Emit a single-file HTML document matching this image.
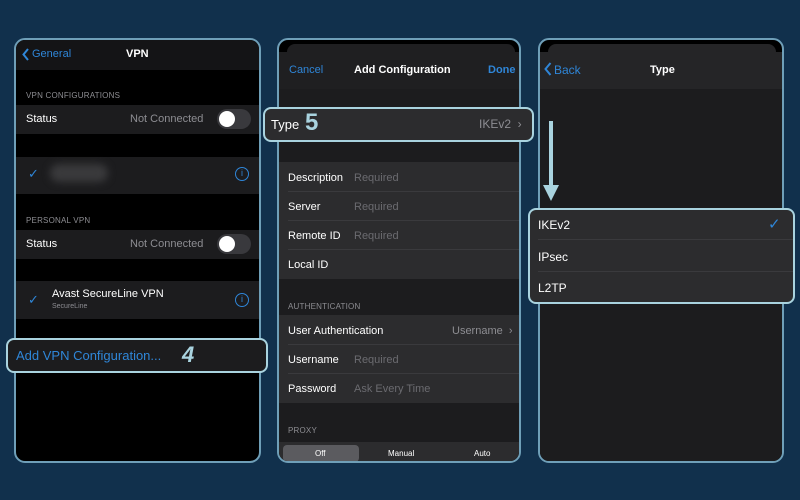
<!DOCTYPE html>
<html><head><meta charset="utf-8"><style>
*{margin:0;padding:0;box-sizing:border-box}
body{width:800px;height:500px;background:#11304c;font-family:"Liberation Sans",sans-serif;position:relative;overflow:hidden;color:#fff}
.a{position:absolute}
.panel{position:absolute;border:2px solid #6f9fb8;border-radius:11px;overflow:hidden;background:#000}
.t{position:absolute;white-space:nowrap}
.hl{position:absolute;border:2px solid #a9d3df;border-radius:8px}
.lbl{font-size:8px;color:#8d8d92;letter-spacing:.2px}
.r{font-size:11px}
.g{color:#6b6b70;font-size:11px}
.blue{color:#2f86d8}
.sep{position:absolute;height:1px;background:#3a3a3d}
.tog{position:absolute;width:34px;height:20px;border-radius:10px;background:#39393d}
.tog:after{content:"";position:absolute;left:2px;top:2px;width:16px;height:16px;border-radius:50%;background:#fff}
</style></head><body>

<!-- Panel 1 -->
<div class="panel" style="left:14px;top:38px;width:247px;height:425px">
  <div class="a" style="left:0;top:0;width:100%;height:30px;background:#141416"></div>
  <svg class="a" style="left:6px;top:8px" width="8" height="13"><path d="M6 1L1.5 6.5L6 12" stroke="#2f86d8" stroke-width="2" fill="none"/></svg>
  <div class="t blue r" style="left:16px;top:8px">General</div>
  <div class="t r" style="left:110px;top:8px;font-weight:bold">VPN</div>
  <div class="t lbl" style="left:10px;top:51px">VPN CONFIGURATIONS</div>
  <div class="a" style="left:0;top:65px;width:100%;height:29px;background:#1c1c1e"></div>
  <div class="t r" style="left:10px;top:73px">Status</div>
  <div class="t r" style="left:114px;top:73px;color:#8d8d92">Not Connected</div>
  <div class="tog" style="left:201px;top:69px"></div>
  <div class="a" style="left:0;top:117px;width:100%;height:37px;background:#1c1c1e"></div>
  <div class="t blue" style="left:12px;top:126px;font-size:13px">✓</div>
  <div class="a" style="left:34px;top:124px;width:58px;height:18px;border-radius:9px;background:#3a3a3c;filter:blur(4px)"></div>
  <div class="a" style="left:219px;top:127px;width:14px;height:14px;border:1.5px solid #2f86d8;border-radius:50%;font-size:9px;color:#2f86d8;text-align:center;line-height:11px">i</div>
  <div class="t lbl" style="left:10px;top:176px">PERSONAL VPN</div>
  <div class="a" style="left:0;top:190px;width:100%;height:29px;background:#1c1c1e"></div>
  <div class="t r" style="left:10px;top:198px">Status</div>
  <div class="t r" style="left:114px;top:198px;color:#8d8d92">Not Connected</div>
  <div class="tog" style="left:201px;top:194px"></div>
  <div class="a" style="left:0;top:241px;width:100%;height:38px;background:#1c1c1e"></div>
  <div class="t blue" style="left:12px;top:252px;font-size:13px">✓</div>
  <div class="t r" style="left:36px;top:248px">Avast SecureLine VPN</div>
  <div class="t" style="left:36px;top:263px;font-size:7px;color:#8d8d92">SecureLine</div>
  <div class="a" style="left:219px;top:253px;width:14px;height:14px;border:1.5px solid #2f86d8;border-radius:50%;font-size:9px;color:#2f86d8;text-align:center;line-height:11px">i</div>
</div>
<div class="hl" style="left:6px;top:338px;width:262px;height:35px;background:#1c1c1e">
  <div class="t blue" style="left:8px;top:8px;font-size:13px">Add VPN Configuration...</div>
  <div class="t" style="left:174px;top:2px;font-size:22px;font-weight:bold;color:#a9d3df;font-style:italic">4</div>
</div>

<!-- Panel 2 -->
<div class="panel" style="left:277px;top:38px;width:244px;height:425px;background:#000">
  <div class="a" style="left:8px;top:4px;width:228px;height:20px;border-radius:8px 8px 0 0;background:#1f1f21"></div>
  <div class="a" style="left:0;top:12px;width:100%;height:413px;background:#1c1c1e"></div>
  <div class="a" style="left:0;top:12px;width:100%;height:37px;background:#1f1f21"></div>
  <div class="t blue r" style="left:10px;top:24px">Cancel</div>
  <div class="t r" style="left:75px;top:24px;font-weight:bold">Add Configuration</div>
  <div class="t blue r" style="left:209px;top:24px;font-weight:bold">Done</div>
  <div class="a" style="left:0;top:122px;width:100%;height:117px;background:#2c2c2e"></div>
  <div class="sep" style="left:9px;right:0;top:151px"></div>
  <div class="sep" style="left:9px;right:0;top:180px"></div>
  <div class="sep" style="left:9px;right:0;top:209px"></div>
  <div class="t r" style="left:9px;top:132px">Description</div><div class="t g" style="left:75px;top:132px">Required</div>
  <div class="t r" style="left:9px;top:161px">Server</div><div class="t g" style="left:75px;top:161px">Required</div>
  <div class="t r" style="left:9px;top:190px">Remote ID</div><div class="t g" style="left:75px;top:190px">Required</div>
  <div class="t r" style="left:9px;top:219px">Local ID</div>
  <div class="t lbl" style="left:9px;top:262px">AUTHENTICATION</div>
  <div class="a" style="left:0;top:275px;width:100%;height:88px;background:#2c2c2e"></div>
  <div class="sep" style="left:9px;right:0;top:304px"></div>
  <div class="sep" style="left:9px;right:0;top:333px"></div>
  <div class="t r" style="left:9px;top:285px">User Authentication</div><div class="t r" style="left:173px;top:285px;color:#8d8d92">Username &nbsp;›</div>
  <div class="t r" style="left:9px;top:314px">Username</div><div class="t g" style="left:75px;top:314px">Required</div>
  <div class="t r" style="left:9px;top:343px">Password</div><div class="t g" style="left:75px;top:343px">Ask Every Time</div>
  <div class="t lbl" style="left:9px;top:386px">PROXY</div>
  <div class="a" style="left:0;top:402px;width:100%;height:23px;background:#2c2c2e"></div>
  <div class="a" style="left:4px;top:405px;width:76px;height:17px;border-radius:4px;background:#5b5b5f"></div>
  <div class="t" style="left:36px;top:409px;font-size:8px">Off</div>
  <div class="t" style="left:109px;top:409px;font-size:8px">Manual</div>
  <div class="t" style="left:195px;top:409px;font-size:8px">Auto</div>
</div>
<div class="hl" style="left:263px;top:107px;width:271px;height:35px;background:#2c2c2e">
  <div class="t" style="left:6px;top:8px;font-size:13px">Type</div>
  <div class="t" style="left:40px;top:0px;font-size:24px;font-weight:bold;color:#a9d3df">5</div>
  <div class="t" style="left:214px;top:8px;font-size:12px;color:#8d8d92">IKEv2 &nbsp;›</div>
</div>

<!-- Panel 3 -->
<div class="panel" style="left:538px;top:38px;width:246px;height:425px;background:#000">
  <div class="a" style="left:8px;top:4px;width:228px;height:20px;border-radius:8px 8px 0 0;background:#252527"></div>
  <div class="a" style="left:0;top:12px;width:100%;height:413px;background:#1c1c1e"></div>
  <div class="a" style="left:0;top:12px;width:100%;height:37px;background:#252527"></div>
  <svg class="a" style="left:4px;top:22px" width="8" height="14"><path d="M6.5 1L1.5 7L6.5 13" stroke="#2f86d8" stroke-width="2" fill="none"/></svg>
  <div class="t blue" style="left:14px;top:23px;font-size:12px">Back</div>
  <div class="t r" style="left:110px;top:24px;font-weight:bold">Type</div>
</div>
<svg class="a" style="left:541px;top:121px" width="20" height="82"><rect x="8" y="0" width="4" height="66" fill="#a9d3df"/><path d="M2 64L18 64L10 80Z" fill="#a9d3df"/></svg>
<div class="hl" style="left:528px;top:208px;width:267px;height:96px;background:#2c2c2e">
  <div class="sep" style="left:8px;right:0;top:29px"></div>
  <div class="sep" style="left:8px;right:0;top:61px"></div>
  <div class="t" style="left:8px;top:8px;font-size:12px">IKEv2</div>
  <div class="t blue" style="left:238px;top:5px;font-size:15px">✓</div>
  <div class="t" style="left:8px;top:40px;font-size:12px">IPsec</div>
  <div class="t" style="left:8px;top:71px;font-size:12px">L2TP</div>
</div>
</body></html>
